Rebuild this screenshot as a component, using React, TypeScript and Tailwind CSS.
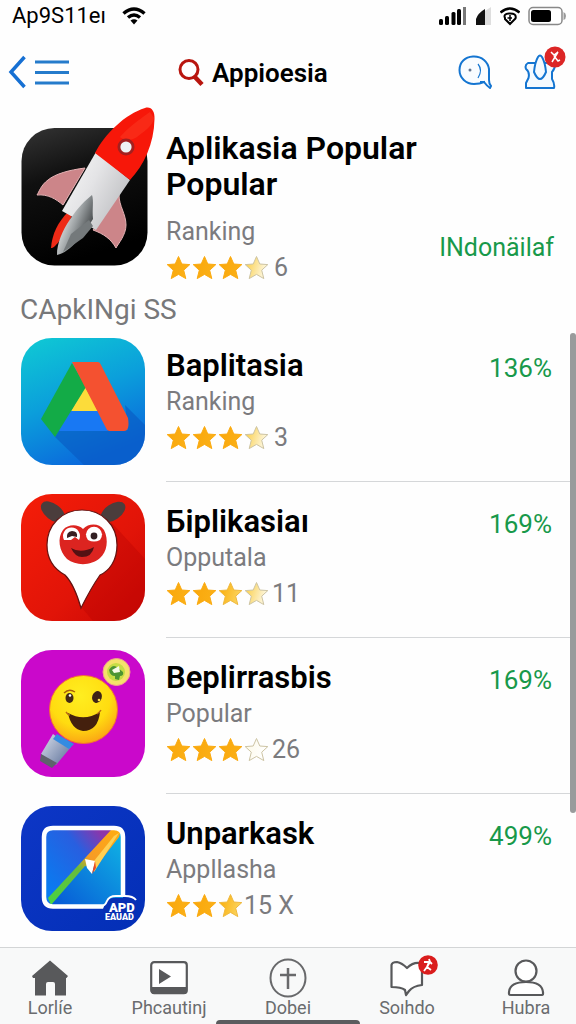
import React from "react";

function Star({ fill, id }: { fill: number; id: string }) {
  return (
    <svg viewBox="0 0 26 26" className="size-[26px] shrink-0" aria-hidden="true">
      <defs>
        <linearGradient id={id} x1="0" x2="1" y1="0" y2="0.3">
          {fill === 1 && <stop offset="0" stopColor="#f9a60a" />}
          {fill === 1 && <stop offset="1" stopColor="#fbb016" />}
          {fill === 0.8 && <stop offset="0.2" stopColor="#fbb315" />}
          {fill === 0.8 && <stop offset="1" stopColor="#fbd35c" />}
          {fill === 0.5 && <stop offset="0.2" stopColor="#fbd45c" />}
          {fill === 0.5 && <stop offset="0.9" stopColor="#fdf3d0" />}
          {fill === 0 && <stop offset="0" stopColor="#fdf9e6" />}
          {fill === 0 && <stop offset="1" stopColor="#ffffff" />}
        </linearGradient>
      </defs>
      <path
        d="M12.5 1.5 L15.8 9 L23.8 9.6 L17.7 15.2 L19.8 23.6 L12.5 19.4 L5.2 23.6 L7.3 15.2 L1.2 9.6 L9.2 9 Z"
        fill={`url(#${id})`}
        stroke={fill <= 0.5 ? "#cdc4a4" : fill === 0.8 ? "#efb93f" : "#fbab12"}
        strokeWidth="1"
        strokeLinejoin="round"
      />
    </svg>
  );
}

function Rating({ id, stars, count }: { id: string; stars: number[]; count: string }) {
  return (
    <div className="flex h-9 items-center text-[25px] leading-9 text-[#7b7b7e]">
      <span className="flex" role="img" aria-label="Rating">
        {stars.map((s, i) => (
          <Star key={i} id={`${id}-${i}`} fill={s} />
        ))}
      </span>
      <span className={stars.length > 3 ? (count.length === 1 ? "pl-1" : "pl-0.5") : ""}>{count}</span>
    </div>
  );
}

function RocketIcon() {
  return (
    <svg viewBox="0 0 140 164" className="h-[164px] w-[140px]" aria-hidden="true">
      <defs>
        <linearGradient id="rk-bg" x1="0" y1="0" x2="0.3" y2="1">
          <stop offset="0" stopColor="#343434" />
          <stop offset="0.4" stopColor="#101010" />
          <stop offset="1" stopColor="#000" />
        </linearGradient>
        <linearGradient id="rk-body" x1="0" y1="0" x2="1" y2="0.6">
          <stop offset="0" stopColor="#fafafa" />
          <stop offset="0.5" stopColor="#e4e4e6" />
          <stop offset="1" stopColor="#bfc0c3" />
        </linearGradient>
        <linearGradient id="rk-steel" x1="0.2" y1="0.3" x2="0.8" y2="0.7">
          <stop offset="0" stopColor="#e2e5e6" />
          <stop offset="0.5" stopColor="#9a9fa1" />
          <stop offset="1" stopColor="#4c5052" />
        </linearGradient>
      </defs>
      <rect x="0.5" y="25" width="126" height="137.500" rx="33" fill="url(#rk-bg)" />
      <path d="M64 65 C48 67 34 71 27 77 C20 82 18 89 16 92 C27 91 35 96 42 102 Z" fill="#cc8589" stroke="#e5b3b5" strokeWidth="1" />
      <path d="M98 92 C98 103 105 111 105 122 C105 132 97 141 95 145 C90 136 83 131 72 127 Z" fill="#cc8589" stroke="#e5b3b5" strokeWidth="1" />
      <path d="M47 109 C37 119 31 131 30 145 C33 146 43 135 51 112 Z" fill="#ee2a16" />
      <path d="M75 49 L109 77 L75 127 L41 108 Z" fill="url(#rk-body)" />
      <path d="M74 50 C84 31 104 11 124 5 C130 3 134 8 133.500 16 C133 41 123 62 109 77 Z" fill="#f71709" />
      <path d="M129 9 C116 18 107 25 99 34 C103 38 110 38 116 34 C122 29 132 23 133 15 Z" fill="#fb4027" opacity="0.45" />
      <path d="M71 92 C59 101 36 128 36 152 C50 149 62 132 72 116 C71 106 73 98 71 92 Z" fill="url(#rk-steel)" />
      <path d="M50 131 L68 117 L72 123 L62 135 L42 149 Z" fill="#74797b" />
      <circle cx="105" cy="44" r="8.500" fill="#a3201f" />
      <circle cx="105" cy="44" r="5.600" fill="#eef3f4" />
    </svg>
  );
}

function DriveIcon() {
  return (
    <svg viewBox="0 0 124 127" className="h-[127px] w-[124px]" aria-hidden="true">
      <defs>
        <linearGradient id="dr-bg" x1="0.1" y1="0" x2="0.5" y2="1">
          <stop offset="0" stopColor="#0fc8d4" />
          <stop offset="0.5" stopColor="#0b9fdb" />
          <stop offset="1" stopColor="#0b69dc" />
        </linearGradient>
        <clipPath id="dr-clip"><rect width="124" height="127" rx="31" /></clipPath>
      </defs>
      <g clipPath="url(#dr-clip)">
        <rect width="124" height="127" fill="url(#dr-bg)" />
        <path d="M34 99 L63 127 H124 V87 L104 67 L107 92 H38 Z" fill="#0958c1" opacity="0.6" />
        <path d="M50 72 H78 L87 93 H38 Z" fill="#1878f3" />
        <path d="M64 49 L78 73 H50 Z" fill="#fcdc3a" />
        <path d="M51 25 L65 49 L34 99 L20 81 Z" fill="#13ab47" />
        <path d="M51 24 H77 Q79 24 80 27 L107 80 Q109 93 103 93 H88 Q86 93 85 90 Z" fill="#f45130" />
      </g>
    </svg>
  );
}

function PinIcon() {
  return (
    <svg viewBox="0 0 124 127" className="h-[127px] w-[124px]" aria-hidden="true">
      <defs>
        <linearGradient id="pn-bg" x1="0" y1="0" x2="1" y2="1">
          <stop offset="0" stopColor="#f51d08" />
          <stop offset="0.6" stopColor="#e11408" />
          <stop offset="1" stopColor="#c90704" />
        </linearGradient>
        <clipPath id="pn-clip"><rect width="124" height="127" rx="31" /></clipPath>
      </defs>
      <g clipPath="url(#pn-clip)">
        <rect width="124" height="127" fill="url(#pn-bg)" />
        <path d="M90 28 L124 65 V127 H72 L61 114 Z" fill="#b80403" opacity="0.35" />
        <ellipse cx="32" cy="18" rx="14" ry="8" transform="rotate(38 32 18)" fill="#4b3d3c" />
        <ellipse cx="92" cy="18" rx="14" ry="8" transform="rotate(-35 92 18)" fill="#4b3d3c" />
        <path d="M61 16 C81 16 96 31 96 51 C96 67 88 77 79 81 C72 91 65 104 60 114 C56 100 52 89 44 81 C33 75 26 65 26 51 C26 31 41 16 61 16 Z" fill="#fff" stroke="#651412" strokeWidth="1.2" />
        <path d="M62 35 C68 29 78 29 83 36 C88 46 86 58 79 64 C70 72 55 72 46 65 C38 57 36 44 42 36 C47 30 57 30 62 35 Z" fill="#dc2420" />
        <path d="M43 46 A8.500 8.500 0 1 1 58 46 L54 43 L50 46 Z" fill="#fff" />
        <path d="M67 46 A8 8 0 1 1 79 46 Q73 49 67 46 Z" fill="#fff" />
        <path d="M46 44 Q45 38 51 37 Q57 37 56 43 L51 42 Z" fill="#3a2023" />
        <circle cx="73" cy="42" r="3.400" fill="#321f22" />
        <path d="M50 54 Q60 60 73 53 Q71 63 61 63 Q54 63 50 54 Z" fill="#541113" />
      </g>
    </svg>
  );
}

function SmileIcon() {
  return (
    <svg viewBox="0 0 124 127" className="h-[127px] w-[124px]" aria-hidden="true">
      <defs>
        <radialGradient id="sm-face" cx="0.45" cy="0.3" r="0.75">
          <stop offset="0" stopColor="#ffee20" />
          <stop offset="0.6" stopColor="#ffdc10" />
          <stop offset="1" stopColor="#fa9c15" />
        </radialGradient>
        <linearGradient id="sm-handle" x1="0" y1="0" x2="1" y2="0.8">
          <stop offset="0" stopColor="#dbe1ed" />
          <stop offset="1" stopColor="#64779e" />
        </linearGradient>
      </defs>
      <rect width="124" height="127" rx="31" fill="#ca08cb" />
      <path d="M32 84 L50 97 L35 115 L20 104 Z" fill="url(#sm-handle)" />
      <path d="M36 84 L53 94 L48 99 L32 89 Z" fill="#338be1" />
      <path d="M20 104 L36 113 L31 118 L19 111 Z" fill="#5e626c" />
      <circle cx="62.500" cy="59.500" r="34" fill="url(#sm-face)" stroke="#f26c38" strokeWidth="1" />
      <circle cx="95.500" cy="22" r="13.500" fill="#f5e16b" stroke="#f0a28c" />
      <circle cx="95" cy="22" r="9" fill="#c6dc45" />
      <path d="M88 20 Q92 13 97 18 L102 22 Q103 26 99 26 L98 30 L94 29 L94 26 Q89 26 88 20 Z" fill="#4b9433" />
      <path d="M91 20 L98 16 L99 22 L93 23 Z" fill="#f7fae7" />
      <ellipse cx="48.500" cy="48" rx="4" ry="5" fill="#442916" />
      <ellipse cx="76" cy="47" rx="4.800" ry="6" transform="rotate(18 76 47)" fill="#3e2416" />
      <circle cx="49" cy="45.500" r="1.300" fill="#fff" />
      <circle cx="78" cy="50" r="1.300" fill="#ffe345" />
      <path d="M43 43 Q48 38 54 42" fill="none" stroke="#a96009" strokeWidth="1.400" />
      <path d="M47 63 Q63 72 79 62 Q77 81 62 81 Q50 79 47 63 Z" fill="#44200d" />
      <path d="M45 62 Q47 65 49 65 M76 64 Q79 62 80 60" stroke="#ba6b14" strokeWidth="1.400" fill="none" />
    </svg>
  );
}

function CanvasIcon() {
  return (
    <svg viewBox="0 0 124 127" className="h-[127px] w-[124px]" aria-hidden="true">
      <defs>
        <linearGradient id="cv-bg" x1="0" y1="0" x2="1" y2="1">
          <stop offset="0" stopColor="#0d36c6" />
          <stop offset="1" stopColor="#032fb6" />
        </linearGradient>
        <linearGradient id="cv-l" x1="0" y1="0.8" x2="1" y2="0">
          <stop offset="0" stopColor="#087cf1" />
          <stop offset="0.55" stopColor="#285fe0" />
          <stop offset="0.85" stopColor="#8d35aa" />
        </linearGradient>
        <linearGradient id="cv-r" x1="0" y1="1" x2="1" y2="0">
          <stop offset="0" stopColor="#0751d5" />
          <stop offset="1" stopColor="#10b9e5" />
        </linearGradient>
        <linearGradient id="cv-s" x1="0" y1="1" x2="1" y2="0">
          <stop offset="0" stopColor="#47d443" />
          <stop offset="0.45" stopColor="#69bc3b" />
          <stop offset="0.6" stopColor="#f79b25" />
          <stop offset="1" stopColor="#ffad11" />
        </linearGradient>
      </defs>
      <rect width="124" height="125" rx="31" fill="url(#cv-bg)" />
      <rect x="23" y="22" width="79" height="79" rx="9" fill="url(#cv-r)" />
      <path d="M25 96 V31 Q25 24 32 24 H96 L28 97 Z" fill="url(#cv-l)" />
      <path d="M27 92 L90 24 H100 L98 31 L74 62 L64 60 L30 99 Z" fill="url(#cv-s)" />
      <path d="M98 27 L73 66 L73 55 L93 30 Z" fill="#ffd053" />
      <path d="M64 53 L74 55 L71 68 L66 62 Z" fill="#fff" />
      <path d="M74 55 L75 62 L71 68 Z" fill="#e94a28" />
      <path d="M83 100.500 H32 Q23 100.500 23 91 V31 Q23 22 32 22 H93 Q102 22 102 31 V90" fill="none" stroke="#fff" strokeWidth="4.500" />
      <path d="M82 103 Q85 92 92 92 H112 L117 98 L112 114 H84 Z" fill="#082fb4" />
      <path d="M80 100.500 Q84 100 86 95 Q88 90 95 90 H104 Q112 90 115 94" fill="none" stroke="#fff" strokeWidth="2" />
      <text x="88" y="106" fontFamily="Roboto, sans-serif" fontSize="13" fontWeight="900" fill="#fff">APD</text>
      <text x="84" y="114" fontFamily="Roboto, sans-serif" fontSize="9" fontWeight="900" fill="#fff">EAUAD</text>
    </svg>
  );
}

const apps = [
  { id: "a", name: "Baplitasia", kind: "Ranking", stars: [1, 1, 1, 0.5], count: "3", pct: "136%", Icon: DriveIcon },
  { id: "b", name: "Бiplikasiaı", kind: "Opputala", stars: [1, 1, 0.8, 0.5], count: "11", pct: "169%", Icon: PinIcon },
  { id: "c", name: "Beplirrasbis", kind: "Popular", stars: [1, 1, 1, 0], count: "26", pct: "169%", Icon: SmileIcon },
  { id: "d", name: "Unparkask", kind: "Appllasha", stars: [1, 1, 0.8], count: "15 X", pct: "499%", Icon: CanvasIcon },
];

function StatusBar() {
  return (
    <div className="flex h-8 items-center justify-between pl-3 pr-2.5">
      <div className="flex items-center gap-4">
        <span className="text-[22px] leading-8 text-black">Ap9S11eı</span>
        <svg viewBox="0 0 24 18" className="h-[18px] w-6" fill="none" stroke="#000" strokeWidth="3.500" aria-hidden="true">
          <path d="M1.500 6.500 Q12 -2.500 22.500 6.500" />
          <path d="M6 10.500 Q12 5.500 18 10.500" />
          <path d="M8.500 13.500 Q12 11 15.500 13.500 L12 17.500 Z" fill="#000" stroke="none" />
        </svg>
      </div>
      <div className="flex items-center gap-2">
        <svg viewBox="0 0 28 20" className="h-5 w-7" aria-hidden="true">
          <rect x="0" y="13" width="4" height="6" rx="1.500" />
          <rect x="6" y="10" width="4" height="9" rx="1.500" />
          <rect x="12.500" y="6" width="4" height="13" rx="1.500" />
          <rect x="18" y="3" width="4" height="16" rx="1.500" />
          <rect x="24" y="1" width="3" height="18" fill="#777" />
        </svg>
        <svg viewBox="0 0 17 20" className="h-5 w-[17px]" aria-hidden="true">
          <path d="M10 5 L16 1 V19 H10 Z" fill="#dedede" />
          <path d="M1 19 V13 Q3 7 10 3 V19 Z" fill="#111" />
        </svg>
        <svg viewBox="0 0 20 20" className="size-5" fill="none" stroke="#000" strokeWidth="2.500" aria-hidden="true">
          <path d="M0.500 6.500 Q10 -1.500 19.500 6.500" />
          <path d="M5 12 Q3 8 9 7.500 Q17 7 15.500 12.500 L10 18 L5 13 Z" strokeWidth="2" />
          <path d="M10 9 V15 M7.500 12 H12" strokeWidth="1.500" />
        </svg>
        <svg viewBox="0 0 38 20" className="h-5 w-[38px]" aria-hidden="true">
          <rect x="1" y="1.500" width="33" height="17" rx="4" fill="#fff" stroke="#888" strokeWidth="1.500" />
          <rect x="3" y="4" width="20" height="12" rx="2.500" />
          <path d="M35.500 6 Q38 7 38 10 Q38 13 35.500 14 Z" fill="#999" />
        </svg>
      </div>
    </div>
  );
}

function Header() {
  return (
    <header className="grid h-20 grid-cols-[170px_1fr_auto] items-center pl-2 pr-3">
      <div className="flex items-center gap-2">
        <button aria-label="Back">
          <svg viewBox="0 0 18 34" className="h-[34px] w-[18px]" fill="none" stroke="#1670d3" strokeWidth="3.500" aria-hidden="true">
            <path d="M16.500 2 L3 17 L16.500 32" />
          </svg>
        </button>
        <button aria-label="Menu">
          <svg viewBox="0 0 36 28" className="h-7 w-9" stroke="#257bcb" strokeWidth="2.800" aria-hidden="true">
            <path d="M1 4 H35 M1 14.500 H35 M1 25 H35" />
          </svg>
        </button>
      </div>
      <h1 className="flex items-center gap-2 pt-0.5 text-[26px] font-semibold leading-9 text-black">
        <svg viewBox="0 0 26 30" className="h-[30px] w-[26px]" fill="none" stroke="#b8150e" aria-hidden="true">
          <circle cx="11" cy="11.500" r="9" strokeWidth="3" />
          <path d="M16 18 L24 26.500" strokeWidth="4.500" />
        </svg>
        Appioesia
      </h1>
      <div className="flex items-center gap-8">
        <button aria-label="Chat">
          <svg viewBox="0 0 34 34" className="size-[34px]" fill="#f9fcff" stroke="#1475d1" strokeWidth="2" aria-hidden="true">
            <path d="M15 1.500 C24 1 30 7 31 14 V25 Q31 29 33 31 L32 33 Q29 31 26 27 Q22 29 16 29 C8 29 1.500 23 1.500 15 C1.500 7 7 2 15 1.500 Z" />
            <path d="M20 9 Q25 15 20 23" strokeWidth="1.200" />
            <path d="M22 27 H27" />
            <circle cx="12" cy="15" r="1.500" fill="#65758f" stroke="none" />
          </svg>
        </button>
        <button aria-label="Notifications" className="relative pr-2">
          <svg viewBox="0 0 32 36" className="h-9 w-8" fill="#f4faff" stroke="#1475d1" strokeWidth="2" strokeLinejoin="round" aria-hidden="true">
            <path d="M12 9 H4 Q0.500 11 2 15 Q6 18 4.500 24 L2 29 V34 H30 Q31 30 28 25 V18 Q31 15 31 10 Q29 8 21 9" />
            <path d="M10 18 Q11 8 14 3 Q16 0 18 3 Q21 8 22 18 Q19 25 16 25 Q13 25 10 18 Z" />
          </svg>
          <svg viewBox="0 0 22 22" className="absolute -right-0.5 -top-2 size-[22px]" aria-hidden="true">
            <circle cx="11" cy="11" r="10.500" fill="#dc2626" />
            <path d="M7 6 L10 9 L14 6 M14 6 L8 16 M10 10 L14 15 L16 14" fill="none" stroke="#fff" strokeWidth="1.500" />
          </svg>
        </button>
      </div>
    </header>
  );
}

function NavItem({ label, children }: { label: string; children: React.ReactNode }) {
  return (
    <button className="flex w-20 flex-col items-center text-[18px] leading-6 text-[#6a6c6e]">
      <span className="flex h-10 items-center justify-center">{children}</span>
      <span className="-mt-0.5">{label}</span>
    </button>
  );
}

export default function App() {
  return (
    <div className="relative flex min-h-screen flex-col bg-[#fefefe] font-[Roboto,sans-serif]">
      <StatusBar />
      <Header />
      <main className="relative flex-1">
        <section className="flex h-[178px] pl-[21px] pr-[22px]">
          <div className="-mt-[9px] w-[145px] shrink-0">
            <RocketIcon />
          </div>
          <div className="flex-1 pt-[18px]">
            <h2 className="text-[32px] font-semibold leading-9 text-black">
              Aplikasia Popular
              <br />
              Popular
            </h2>
            <div className="flex justify-between pt-3">
              <div>
                <p className="text-[25px] leading-9 text-[#7b7b7e]">Ranking</p>
                <Rating id="top" stars={[1, 1, 1, 0.5]} count="6" />
              </div>
              <p className="pt-4 text-[25px] leading-9 text-[#18994a]">INdonäilaf</p>
            </div>
          </div>
        </section>
        <h3 className="-mb-1 pl-5 text-[28px] leading-10 text-[#77787a]">CApkINgi SS</h3>
        <ul>
          {apps.map(({ id, name, kind, stars, count, pct, Icon }) => (
            <li key={id} className="group flex pl-[21px]">
              <div className="w-[145px] shrink-0 pt-3">
                <Icon />
              </div>
              <div className="flex flex-1 items-start justify-between border-b border-[#d5d7d9] pb-[25px] pr-6 pt-[22px] group-last:border-0 group-last:pb-0">
                <div>
                  <h4 className="text-[31px] font-semibold leading-9 text-black">{name}</h4>
                  <p className="text-[25px] leading-9 text-[#7b7b7e]">{kind}</p>
                  <Rating id={id} stars={stars} count={count} />
                </div>
                <span className="text-[26px] leading-10 text-[#18994a]">{pct}</span>
              </div>
            </li>
          ))}
        </ul>
        <div className="absolute right-0 top-[221px] h-[480px] w-1.5 rounded-full bg-[#999b9c]" />
      </main>
      <nav className="relative flex h-[77px] justify-between border-t border-[#d3d5d6] bg-[#f8f9f9] px-[10px] pt-2.5">
        <NavItem label="Lorlíe">
          <svg viewBox="0 0 36 36" className="size-9" fill="#58595b" aria-hidden="true">
            <path d="M18 0.500 L36 16 L34.500 18 H34 V35.500 H23 V24 Q23 22 21 22 H16 Q14 22 14 24 V35.500 H3 V18 H1 L0 16 Z" />
          </svg>
        </NavItem>
        <NavItem label="Phcautinj">
          <svg viewBox="0 0 38 34" className="h-[34px] w-[38px]" aria-hidden="true">
            <rect x="1.200" y="1.200" width="35.600" height="31" rx="3" fill="#fff" stroke="#58595b" strokeWidth="2.200" />
            <path d="M1 26 H37 V30 Q37 33 34 33 H4 Q1 33 1 30 Z M9 8 L21 15.500 L9 23 Z" fill="#58595b" />
          </svg>
        </NavItem>
        <NavItem label="Dobei">
          <svg viewBox="0 0 38 40" className="h-10 w-[38px]" fill="none" stroke="#68696b" aria-hidden="true">
            <ellipse cx="19" cy="20" rx="17.500" ry="18.500" strokeWidth="2" />
            <path d="M19 10 V31 M11 17 H27" strokeWidth="2.500" />
          </svg>
        </NavItem>
        <NavItem label="Soıhdo">
          <span className="relative">
            <svg viewBox="0 0 34 38" className="h-[38px] w-[34px]" fill="#fff" stroke="#58595b" strokeWidth="2.200" strokeLinejoin="round" aria-hidden="true">
              <path d="M1.500 6 Q2 3 7 3 Q12 4 17 9 Q23 3 30 4 L32 6 V26 Q23 27 19 32 L16 36 L15 31 Q11 28 1.500 28 Z" />
            </svg>
            <svg viewBox="0 0 20 20" className="absolute -right-3.5 -top-1 size-5" aria-hidden="true">
              <circle cx="10" cy="10" r="9.800" fill="#da1d1d" />
              <path d="M6 7 H11 L9 12 L13 15 M11 4 L12 7 L9 12 L6 16 M12 7 L14 9" fill="none" stroke="#fff" strokeWidth="1.800" />
            </svg>
          </span>
        </NavItem>
        <NavItem label="Hubra">
          <svg viewBox="0 0 38 38" className="size-[38px]" fill="#fff" stroke="#58595b" strokeWidth="2.200" aria-hidden="true">
            <circle cx="19" cy="12" r="10.500" />
            <path d="M2 35 V33 Q3 23 19 23 Q35 23 36 33 V35 Q36 36 34 36 H4 Q2 36 2 35 Z" />
          </svg>
        </NavItem>
        <div className="absolute bottom-0 left-1/2 h-1 w-36 -translate-x-1/2 rounded-t-sm bg-[#5b5c5e]" />
      </nav>
    </div>
  );
}
